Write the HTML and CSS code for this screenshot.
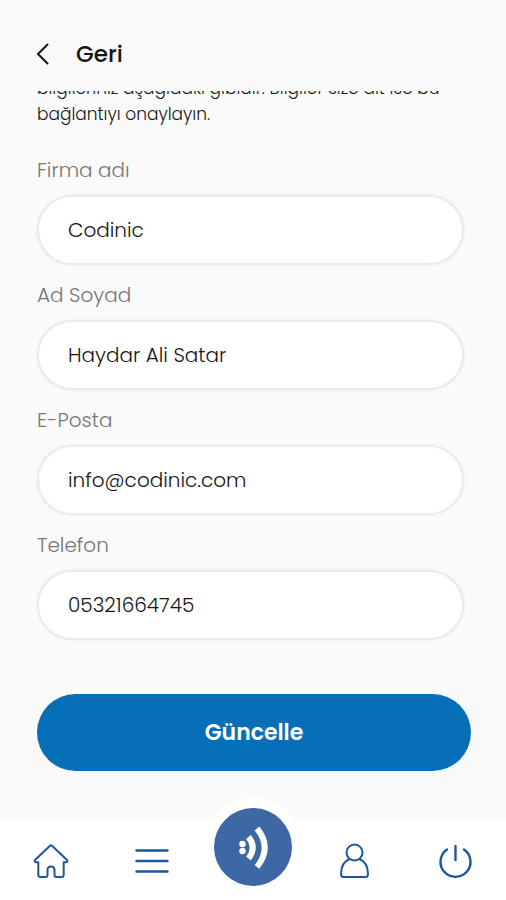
FILE: index.html
```html
<!DOCTYPE html>
<html lang="tr">
<head>
<meta charset="utf-8">
<meta name="viewport" content="width=device-width, initial-scale=1">
<title>Geri</title>
<link rel="stylesheet" href="styles.css">
</head>
<body>
<header class="top">
  <button class="back" type="button">
    <svg width="14" height="22" viewBox="0 0 14 22" aria-hidden="true"><path d="M11.500 1.500 2 11l9.500 9.500"/></svg>
    <span>Geri</span>
  </button>
</header>
<main class="content">
  <div class="notice"><p>bilgileriniz aşağıdaki gibidir. Bilgiler size ait ise bu bağlantıyı onaylayın.</p></div>
  <form class="form">
    <div class="field"><label for="company">Firma adı</label><input id="company" type="text" value="Codinic"></div>
    <div class="field"><label for="name">Ad Soyad</label><input id="name" type="text" value="Haydar Ali Satar"></div>
    <div class="field"><label for="email">E-Posta</label><input id="email" type="email" value="info@codinic.com"></div>
    <div class="field"><label for="phone">Telefon</label><input id="phone" type="tel" value="05321664745"></div>
    <button class="submit" type="button">Güncelle</button>
  </form>
</main>
<nav class="tabs">
  <a href="#home" aria-label="Ana sayfa"><svg class="icon" viewBox="0 0 36 36"><path d="M17 2.800 2 17Q1 19.300 3.300 19.300H5.300V31.500Q5.300 34 7.500 34H12.500Q14.500 34 14.500 32V27Q14.500 23.500 18 23.500T21.500 27V32Q21.500 34 23.500 34H28.500Q30.700 34 30.700 31.500V19.300H32.700Q35 19.300 34 17L19 2.800Q18 1.800 17 2.800"/></svg></a>
  <a href="#menu" aria-label="Menü"><svg class="icon menu" viewBox="0 0 36 36"><path d="M2.500 7.500H33.500M2.500 18H33.500M2.500 28.500H33.500"/></svg></a>
  <a class="scan" href="#scan" aria-label="Temassız"><svg viewBox="0 0 78 78"><g class="dots"><circle cx="28.500" cy="36" r="3.200"/><circle cx="28.500" cy="43" r="3.200"/></g><path d="M34.500 29Q43 39.500 34.500 50.500M43 20.500Q58.500 39.500 43 59"/></svg></a>
  <a href="#profile" aria-label="Profil"><svg class="icon" viewBox="0 0 36 36"><circle cx="18.500" cy="9.500" r="8"/><path d="M13.500 16C7.500 18.500 5 24 5 31Q5 34 7.500 34H29.500Q32 34 32 31C32 24 29.500 18.500 23.500 16"/></svg></a>
  <a href="#logout" aria-label="Çıkış"><svg class="icon power" viewBox="0 0 36 36"><path d="M18.500 3V17M10 6.500A15 15 0 1 0 27 6.500"/></svg></a>
</nav>
</body>
</html>
```
FILE: styles.css
```css
* { box-sizing: border-box; }

body {
  margin: 0;
  min-height: 100vh;
  display: flex;
  flex-direction: column;
  background: #fafafa;
  color: #151515;
  font-family: Poppins, Inter, "Liberation Sans", sans-serif;
  font-size: 20px;
  font-weight: 300;
}

button, input { font: inherit; color: inherit; }

.top { padding: 38px 36px 21px; }

.back {
  display: flex;
  align-items: center;
  gap: 26px;
  padding: 0;
  border: 0;
  background: none;
  font-size: 23px;
  font-weight: 500;
  line-height: 32px;
}

.back svg {
  fill: none;
  stroke: #151515;
  stroke-width: 2;
  stroke-linecap: round;
}

.content { flex: 1; padding: 0 35px 0 37px; }

.notice {
  display: flex;
  flex-direction: column;
  justify-content: flex-end;
  height: 37px;
  padding-bottom: 1px;
  overflow: hidden;
  font-size: 17px;
  line-height: 26px;
}

.notice p { margin: 0; flex: none; }

.form { padding-top: 27px; }

.field { margin: 0 7px 15px 0; }

.field label {
  display: block;
  margin-bottom: 10px;
  color: #777;
  line-height: 30px;
}

.field input {
  display: block;
  width: 100%;
  height: 70px;
  padding: 0 29px;
  border: 2px solid #ebebeb;
  border-radius: 35px;
  background: #fff;
  box-shadow: 0 0 3px #e9e9e9;
  outline: 0;
}

.submit {
  display: block;
  width: 100%;
  height: 77px;
  margin-top: 54px;
  border: 0;
  border-radius: 39px;
  background: #076eb8;
  color: #fff;
  font-size: 22px;
  font-weight: 600;
}

.tabs {
  display: grid;
  grid-template-columns: repeat(5, 1fr);
  justify-items: center;
  height: 80px;
  background: #fff;
}

.tabs a { display: block; margin-top: 23px; height: 36px; }

.tabs svg { display: block; fill: none; stroke: #1d569b; stroke-linecap: round; stroke-linejoin: round; }

.icon { width: 36px; height: 36px; stroke-width: 2; }

.menu, .power { stroke-width: 2.4px; }

.tabs .scan {
  width: 98px;
  height: 98px;
  margin-top: -22px;
  padding: 10px;
  border-radius: 50%;
  background: #fff;
}

.tabs .scan svg {
  width: 78px;
  height: 78px;
  border-radius: 50%;
  background: #3d68a5;
  stroke: #fff;
  stroke-width: 6px;
  stroke-linecap: butt;
}

.scan .dots { fill: #fff; stroke: none; }
```
